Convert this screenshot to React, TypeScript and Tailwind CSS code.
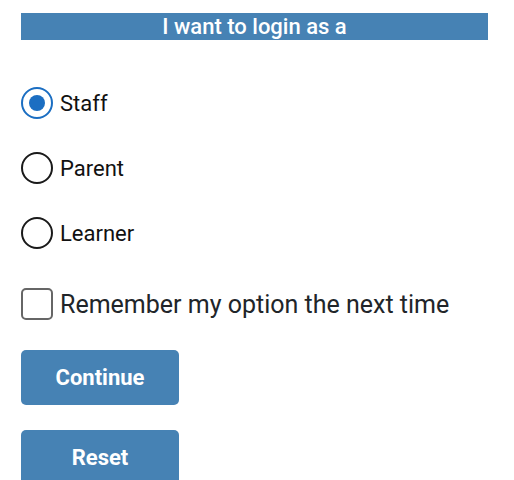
import React, { useState } from 'react';

const options = ['Staff', 'Parent', 'Learner'];

function Radio({ checked }: { checked: boolean }) {
  return (
    <span
      className={
        checked
          ? 'flex h-[32px] w-[32px] shrink-0 items-center justify-center rounded-full border-2 border-[#1b6ec2] bg-white'
          : 'flex h-[32px] w-[32px] shrink-0 items-center justify-center rounded-full border-2 border-[#1a1a1a] bg-white'
      }
    >
      {checked && <span className="h-[16px] w-[16px] rounded-full bg-[#1b6ec2]" />}
    </span>
  );
}

export default function App() {
  const [role, setRole] = useState('Staff');
  const [remember, setRemember] = useState(false);

  return (
    <div className="min-h-[480px] bg-white px-[21px] font-['Roboto',sans-serif]">
      <div className="pt-[13px]">
        <div className="flex h-[27px] w-[467px] items-center justify-center bg-[#4682b4] text-[22px] font-medium leading-none text-white">
          I want to login as a
        </div>
      </div>

      <div className="mt-[47px] flex flex-col gap-[33px]">
        {options.map((opt) => (
          <label
            key={opt}
            className="flex h-[32px] cursor-pointer items-center gap-[7px]"
            onClick={() => setRole(opt)}
          >
            <Radio checked={role === opt} />
            <span className="text-[22px] text-[#111]">{opt}</span>
          </label>
        ))}
      </div>

      <label
        className="mt-[39px] flex h-[32px] cursor-pointer items-center gap-[7px]"
        onClick={() => setRemember(!remember)}
      >
        <span className="flex h-[32px] w-[32px] shrink-0 items-center justify-center rounded-[5px] border-2 border-[#666] bg-white">
          {remember && <span className="text-[20px] leading-none text-[#1b6ec2]">✓</span>}
        </span>
        <span className="pt-[1px] text-[25px] text-[#212529]">Remember my option the next time</span>
      </label>

      <div className="mt-[30px] flex flex-col gap-[25px]">
        <button className="h-[55px] w-[158px] rounded-[5px] bg-[#4682b4] text-[22px] font-bold text-white">
          Continue
        </button>
        <button className="h-[55px] w-[158px] rounded-[5px] bg-[#4682b4] text-[22px] font-bold text-white">
          Reset
        </button>
      </div>
    </div>
  );
}
